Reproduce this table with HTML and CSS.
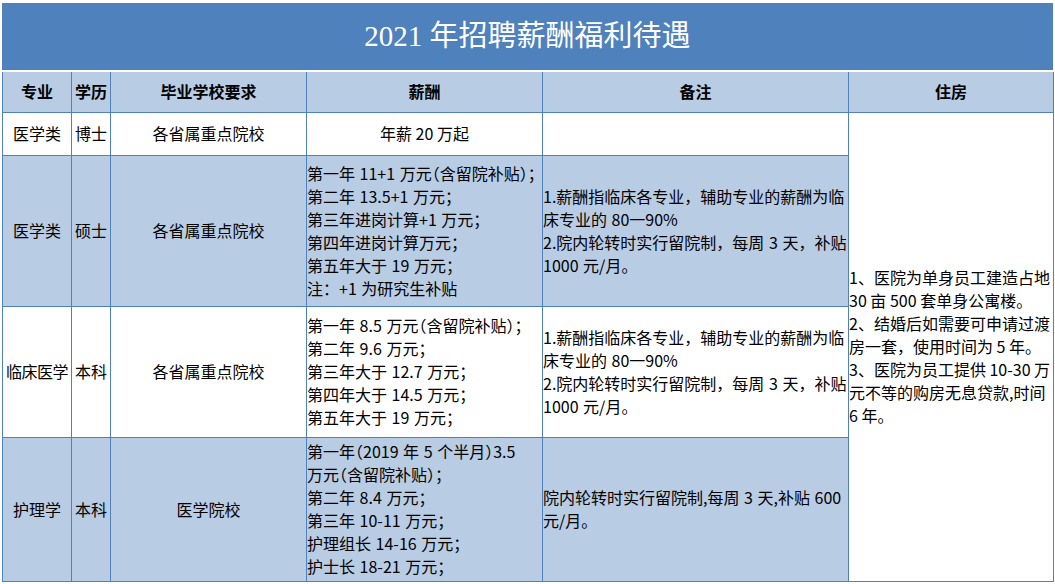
FILE: index.html
```html
<!DOCTYPE html>
<html lang="zh-CN">
<head>
<meta charset="utf-8">
<title>2021 年招聘薪酬福利待遇</title>
<link rel="stylesheet" href="styles.css">
</head>
<body>
<div class="page">
  <div class="title">2021 年招聘薪酬福利待遇</div>
  <table class="grid">
    <colgroup>
      <col class="c1"><col class="c2"><col class="c3"><col class="c4"><col class="c5"><col class="c6">
    </colgroup>
    <thead>
      <tr class="head">
        <th>专业</th><th>学历</th><th>毕业学校要求</th><th>薪酬</th><th>备注</th><th>住房</th>
      </tr>
    </thead>
    <tbody>
      <tr class="r1">
        <td class="ctr">医学类</td>
        <td class="ctr">博士</td>
        <td class="ctr">各省属重点院校</td>
        <td class="ctr">年薪 20 万起</td>
        <td></td>
        <td class="house" rowspan="4">1、医院为单身员工建造占地<br>30 亩 500 套单身公寓楼。<br>2、结婚后如需要可申请过渡<br>房一套，使用时间为 5 年。<br>3、医院为员工提供 10-30 万<br>元不等的购房无息贷款,时间<br>6 年。</td>
      </tr>
      <tr class="r2 fill">
        <td class="ctr">医学类</td>
        <td class="ctr">硕士</td>
        <td class="ctr">各省属重点院校</td>
        <td class="pay">第一年 11+1 万元<span class="hw">（</span>含留院补贴<span class="hw">）</span>；<br>第二年 13.5+1 万元；<br>第三年进岗计算+1 万元；<br>第四年进岗计算万元；<br>第五年大于 19 万元；<br>注：+1 为研究生补贴</td>
        <td class="note">1.薪酬指临床各专业，辅助专业的薪酬为临<br>床专业的 80一90%<br>2.院内轮转时实行留院制，每周 3 天，补贴<br>1000 元/月。</td>
      </tr>
      <tr class="r3">
        <td class="ctr tight">临床医学</td>
        <td class="ctr">本科</td>
        <td class="ctr">各省属重点院校</td>
        <td class="pay">第一年 8.5 万元<span class="hw">（</span>含留院补贴<span class="hw">）</span>；<br>第二年 9.6 万元；<br>第三年大于 12.7 万元；<br>第四年大于 14.5 万元；<br>第五年大于 19 万元；</td>
        <td class="note">1.薪酬指临床各专业，辅助专业的薪酬为临<br>床专业的 80一90%<br>2.院内轮转时实行留院制，每周 3 天，补贴<br>1000 元/月。</td>
      </tr>
      <tr class="r4 fill">
        <td class="ctr">护理学</td>
        <td class="ctr">本科</td>
        <td class="ctr">医学院校</td>
        <td class="pay">第一年（2019 年 5 个半月）3.5<br>万元（含留院补贴）；<br>第二年 8.4 万元；<br>第三年 10-11 万元；<br>护理组长 14-16 万元；<br>护士长 18-21 万元；</td>
        <td class="note">院内轮转时实行留院制,每周 3 天,补贴 600<br>元/月。</td>
      </tr>
    </tbody>
  </table>
</div>
</body>
</html>
```
FILE: styles.css
```css
html, body {
  margin: 0;
  padding: 0;
  background: #ffffff;
}

.page {
  padding: 3px 2px 0 2px;
  width: 1051px;
  font-family: "Noto Sans CJK SC", "Noto Sans CJK JP", sans-serif;
  color: #000000;
}

.title {
  height: 67px;
  background: #4f81bd;
  color: #ffffff;
  font-family: "Liberation Serif", "Noto Sans CJK SC", serif;
  font-size: 29px;
  line-height: 67px;
  text-align: center;
  margin-bottom: 2px;
}

.grid {
  border-collapse: collapse;
  table-layout: fixed;
  width: 1051px;
  font-size: 16px;
  line-height: 23px;
}

.c1 { width: 69px; }
.c2 { width: 39px; }
.c3 { width: 196px; }
.c4 { width: 236px; }
.c5 { width: 306px; }
.c6 { width: 205px; }

.grid th,
.grid td {
  border: 1px solid #4f81bd;
  padding: 0;
  vertical-align: middle;
  white-space: nowrap;
  overflow: hidden;
}

.grid thead th {
  border-top: none;
}

.head {
  height: 40px;
  background: #b8cce4;
}

.head th {
  font-weight: 700;
  text-align: center;
}

.r1 { height: 43px; }
.r2 { height: 151px; }
.r3 { height: 131px; }
.r4 { height: 144px; }

.fill td {
  background: #b8cce4;
}

.ctr {
  text-align: center;
}

.tight {
  letter-spacing: -0.5px;
}

.pay {
  text-align: left;
  padding-left: 1px;
  word-spacing: 1px;
}

.r4 .pay {
  font-feature-settings: "halt";
}

.hw {
  font-feature-settings: "halt";
}

.note {
  text-align: left;
  padding-left: 1px;
  word-spacing: 1px;
}

.house {
  background: #ffffff;
  text-align: left;
  padding-left: 2px;
}
```
